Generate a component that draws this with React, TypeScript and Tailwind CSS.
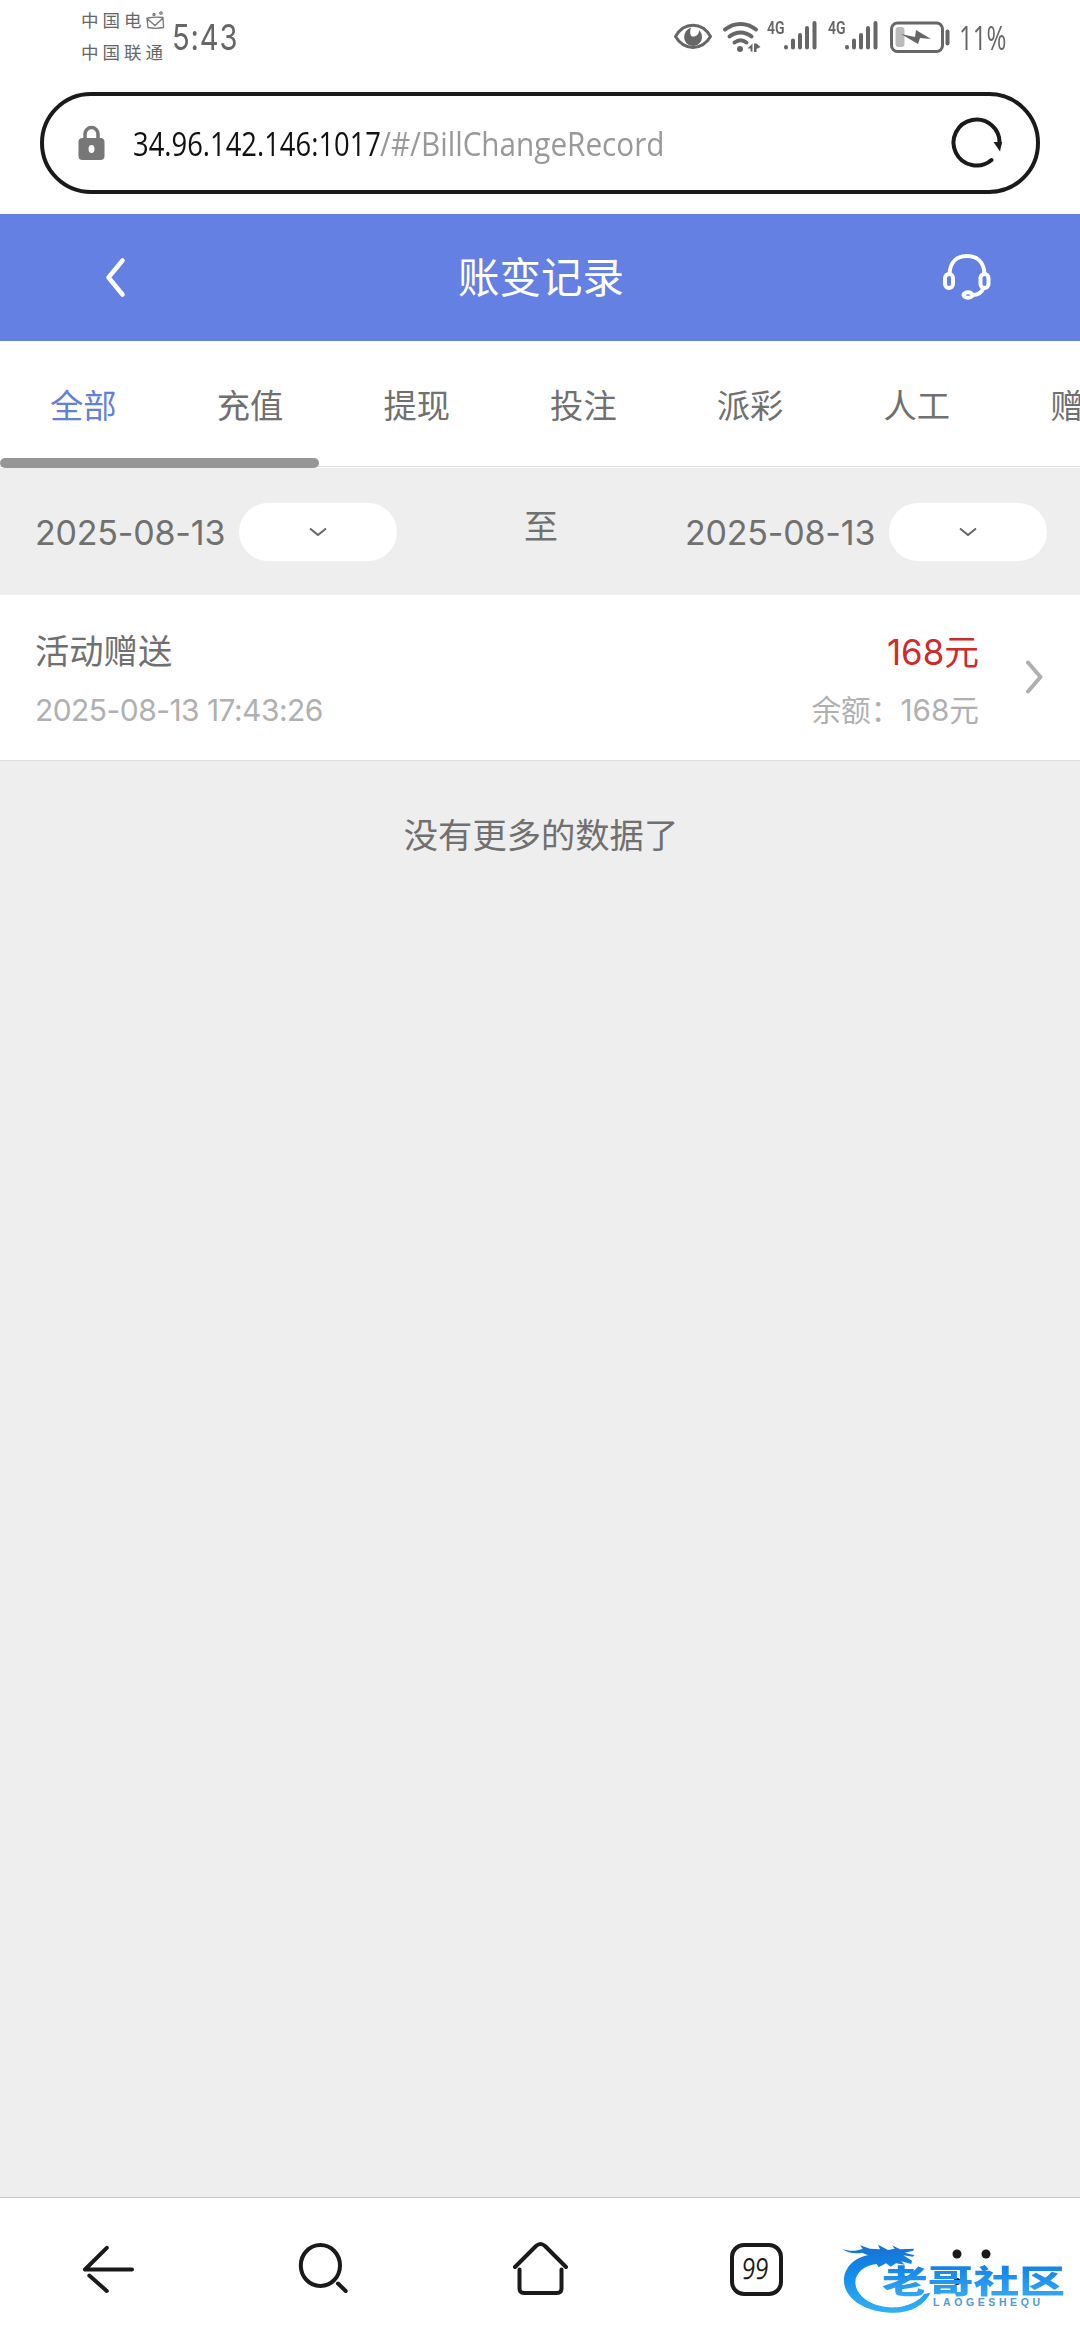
import React from 'react';

interface BillRecord {
  title: string;
  time: string;
  amount: string;
  balance: string;
}

const tabs = ['全部', '充值', '提现', '投注', '派彩', '人工', '赠送'];

const records: BillRecord[] = [
  { title: '活动赠送', time: '2025-08-13 17:43:26', amount: '168元', balance: '168元' },
];

const Signal: React.FC = () => (
  <div className="relative">
    <span className="absolute -top-px left-0 origin-left scale-x-[.78] font-['Roboto',sans-serif] text-[18px] leading-[20px] font-semibold">4G</span>
    <svg width="50" height="32" viewBox="0 0 50 32" fill="none" stroke="#666" strokeWidth="4" strokeLinecap="round">
      <path d="M19 28v.5M26 21.500v7M33 16v12.500M40 9v19.500M47.500 4v24.500" />
    </svg>
  </div>
);

const StatusBar: React.FC = () => (
  <div className="flex h-20 justify-between pt-2.5 pl-[81px] pr-[73px] text-[#666]">
    <div className="flex">
      <div className="w-[91px] text-[17.500px] leading-8 tracking-[4px]">
        <div className="flex h-[22px] items-center">
          中国电
          <svg width="19" height="20" viewBox="0 0 19 20" fill="none" stroke="#777" strokeWidth="1.300" strokeLinecap="round">
            <path d="M2 7c5-1 10-1 15-.5l.5 10c-5 1-11 1-15.500 0L1 7.500l8 7 8-7.500" />
            <circle cx="8" cy="3.500" r="1" />
            <circle cx="15" cy="2" r="1.200" />
          </svg>
        </div>
        <div className="mt-2.5 flex h-[22px] items-center">中国联通</div>
      </div>
      <div className="mt-2 w-[66px]">
        <span className="inline-block origin-left scale-x-[.81] text-[36px] leading-[38px] tracking-[1px]">5:43</span>
      </div>
    </div>
    <div className="flex">
      <svg className="mt-[13px]" width="38" height="27" viewBox="0 0 38 27" fill="none">
        <path d="M1.500 13.500C10-1.500 28-1.500 36.500 13.500 28 28 10 28 1.500 13.500Z" stroke="#666" strokeWidth="3" strokeLinejoin="round" />
        <path d="M17 4.500c-8 3-9 13-3 17 7 4 14-1 14-7.500 0-3-1-4.500-3-7 0 4-2 6-5 6.500-3 1-5-3-3-9Z" fill="#666" />
      </svg>
      <svg className="mt-[9px] ml-[10px]" width="40" height="34" viewBox="0 0 40 34" fill="none" stroke="#666" strokeWidth="4" strokeLinecap="round">
        <path d="M3 10.500C12 3 25 3 34 10.500M7.500 17.500C14 12 23 12 29.500 17.500M12.500 23.500c4-3 8-3 12 0" />
        <circle cx="18" cy="30" r="3" fill="#666" stroke="none" />
        <path d="M25.500 29.500l5-5v8h-2v-3ZM32 24.500h2.500l4 3.500-4 2v3H32Z" fill="#666" stroke="none" />
      </svg>
      <div className="mt-[9px] ml-[5px] flex gap-[11px]">
        <Signal />
        <Signal />
      </div>
      <svg className="mt-[11px] ml-[12px]" width="60" height="32" viewBox="0 0 60 32" fill="none">
        <rect x="1.500" y="2" width="51" height="28.500" rx="6" stroke="#666" strokeWidth="3" />
        <rect x="5.500" y="6" width="9" height="20" rx="3" fill="#bbb" />
        <path d="M11 13l14 3 1-7 15 9-11-1-2 6Z" fill="#666" />
        <path d="M57.500 10.500v12" stroke="#666" strokeWidth="4" strokeLinecap="round" />
      </svg>
      <div className="mt-2 ml-[9px] w-[48px] whitespace-nowrap">
        <span className="inline-block origin-left scale-x-[.73] font-['Open_Sans',sans-serif] text-[33px] leading-[40px]">11%</span>
      </div>
    </div>
  </div>
);

const AddressBar: React.FC = () => (
  <div className="mx-10 mt-3 mb-5 flex h-[102px] items-center rounded-full border-4 border-[#1a1a1a] pr-8 pl-[34px]">
    <svg width="28" height="36" viewBox="0 0 28 36">
      <path d="M7 14V9a6.500 6.500 0 0 1 13 0v5" fill="none" stroke="#777" strokeWidth="3.500" />
      <rect x="0.500" y="13" width="26" height="22" rx="4" fill="#777" />
      <ellipse cx="13.500" cy="24" rx="3" ry="4" fill="#fff" />
    </svg>
    <div className="ml-[27px] flex flex-1 items-center pt-0.5 whitespace-nowrap font-['Open_Sans',sans-serif] text-[33px] leading-[40px]">
      <div className="w-[247px]">
        <span className="inline-block origin-left scale-x-[.83] text-[#111]">34.96.142.146:1017</span>
      </div>
      <span className="inline-block origin-left scale-x-[.9] text-[#999]">/#/BillChangeRecord</span>
    </div>
    <svg className="-mt-0.5" width="54" height="54" viewBox="0 0 54 54" fill="none">
      <path d="M41.500 45A23 23 0 1 1 49.500 29" stroke="#1a1a1a" strokeWidth="4" strokeLinecap="round" />
      <path d="M43.500 27h8.500l-2 9.500Z" fill="#1a1a1a" />
    </svg>
  </div>
);

const PageHeader: React.FC = () => (
  <header className="flex h-[127px] items-center justify-between bg-[#6480e3] pr-[88px] pl-[102px] text-white">
    <svg width="32" height="42" viewBox="0 0 32 42" fill="none" stroke="currentColor" strokeWidth="4.500" strokeLinecap="round" strokeLinejoin="round">
      <path d="M20.500 3.500L6.500 20.500L20.500 37.500" />
    </svg>
    <h1 className="pt-[3px] pl-1.5 text-[41.500px] leading-none">账变记录</h1>
    <svg width="50" height="50" viewBox="0 0 50 50" fill="none" stroke="currentColor" strokeWidth="4">
      <path d="M7.500 21C8 8 16 3 25 3s17 5 17.500 18" />
      <rect x="3" y="21" width="8" height="14" rx="4" />
      <rect x="38.500" y="21" width="8" height="14" rx="4" />
      <path d="M41.500 35c-2 5-5 7-11 7" />
      <ellipse cx="26" cy="42" rx="4.500" ry="2.700" />
    </svg>
  </header>
);

const TabBar: React.FC = () => (
  <nav className="relative h-[127px] overflow-hidden">
    <div className="flex h-[126px] items-center border-b border-[#ddd] pt-[5px]">
      {tabs.map((tab, index) => (
        <div
          key={tab}
          className={`w-[166.700px] shrink-0 text-center text-[33.300px] leading-[50px] ${index === 0 ? 'text-[#6480d8]' : 'text-[#707070]'}`}
        >
          {tab}
        </div>
      ))}
    </div>
    <div className="absolute bottom-0 left-0 h-[10px] w-[319px] rounded-full bg-[#969696]" />
  </nav>
);

const DatePicker: React.FC<{ value: string }> = ({ value }) => (
  <div className="flex items-center">
    <span className="w-[204px] pt-0.5 text-[34px] leading-none whitespace-nowrap tracking-[-0.200px]">{value}</span>
    <button className="flex h-[58px] w-[158px] items-center justify-center rounded-full bg-white">
      <svg className="mt-px" width="18" height="10" viewBox="0 0 18 10" fill="none" stroke="#666" strokeWidth="2">
        <path d="M1 1.500l8 6.500 8-6.500" />
      </svg>
    </button>
  </div>
);

const RecordRow: React.FC<{ record: BillRecord }> = ({ record }) => (
  <div className="flex h-[166px] items-center border-b border-[#ddd] bg-white pr-[36px] pl-[35px]">
    <div className="flex-1 pt-[9px]">
      <div className="text-[34.300px] leading-[54px] text-[#707070]">{record.title}</div>
      <div className="mt-0.5 text-[30px] leading-[58px] tracking-[-0.550px] text-[#b0b0b0]">{record.time}</div>
    </div>
    <div className="pt-[9px] text-right">
      <div className="text-[34.800px] leading-[54px] text-[#cf2b2b]">{record.amount}</div>
      <div className="mt-0.5 text-[29.700px] leading-[58px] text-[#b0b0b0]">余额：{record.balance}</div>
    </div>
    <svg className="ml-[45px]" width="20" height="36" viewBox="0 0 20 36" fill="none" stroke="#b0b0b0" strokeWidth="4" strokeLinecap="round" strokeLinejoin="round">
      <path d="M4 2.500L16.500 17L4 31.500" />
    </svg>
  </div>
);

const BrowserNav: React.FC = () => (
  <footer className="grid h-[143px] grid-cols-5 items-center justify-items-center border-t border-[#c8c8c8] bg-white text-[#1a1a1a]">
    <svg width="60" height="60" viewBox="0 0 60 60" fill="none" stroke="currentColor" strokeWidth="4" strokeLinecap="round" strokeLinejoin="round">
      <path d="M28.800 8.800L7 30.500H54M11.300 36.500L28.800 52" />
    </svg>
    <svg width="60" height="60" viewBox="0 0 60 60" fill="none" stroke="currentColor" strokeWidth="4" strokeLinecap="round">
      <ellipse cx="26.400" cy="26.500" rx="19.600" ry="20.500" />
      <path d="M44 44.500L51.700 52" />
    </svg>
    <svg width="60" height="60" viewBox="0 0 60 60" fill="none" stroke="currentColor" strokeWidth="4" strokeLinecap="round" strokeLinejoin="round">
      <path d="M5 28L26 7Q30.500 3 35 7L56 28M9.500 30.500V49.500Q9.500 54 14 54H47Q51.500 54 51.500 49.500V30.500" />
    </svg>
    <div className="flex h-[53px] w-[53px] items-center justify-center rounded-[14px] border-4 border-[#1a1a1a]">
      <span className="inline-block -translate-y-0.5 scale-x-[.8] -skew-x-6 font-['Open_Sans',sans-serif] text-[29px] leading-none">99</span>
    </div>
    <svg width="60" height="60" viewBox="0 0 60 60" fill="currentColor">
      <circle cx="15" cy="15" r="4.500" />
      <circle cx="44" cy="15" r="4.500" />
      <circle cx="15" cy="42.500" r="3.500" />
    </svg>
  </footer>
);

const Watermark: React.FC = () => (
  <div className="absolute top-[2236px] left-[836px] h-[84px] w-[230px]">
    <svg className="absolute top-0 left-0" width="110" height="84" viewBox="0 0 330 252">
      <defs>
        <linearGradient id="dragon" x1="0" y1="0" x2="0" y2="1">
          <stop offset="0" stopColor="#1a6fd0" />
          <stop offset="0.400" stopColor="#118bec" />
          <stop offset="1" stopColor="#31b0f6" />
        </linearGradient>
      </defs>
      <path
        fill="url(#dragon)"
        d="M18 38C40 46 58 46 80 38L72 28L102 38L132 40L126 26L156 42L176 38L168 28L192 40L234 38L232 44L206 50L236 58L230 62L202 58L228 74L226 84L196 76L206 86L180 82L164 92L150 82L128 94L122 84C84 88 56 112 58 142C62 186 118 218 182 214C220 210 250 194 264 174L284 170C264 208 224 232 166 230C88 228 28 190 24 138C22 98 52 66 96 58L78 50C56 54 34 50 18 38Z"
      />
    </svg>
    <div className="absolute top-[27px] left-[46px] origin-left scale-x-[1.430] bg-gradient-to-b from-[#0f7fe6] to-[#38adf5] bg-clip-text text-[32px] leading-[38px] font-black whitespace-nowrap text-transparent">
      老哥社区
    </div>
    <div className="absolute top-[59px] left-[97px] font-['Liberation_Sans',sans-serif] text-[10.500px] leading-[14px] font-bold tracking-[3.600px] whitespace-nowrap text-[#4f9ad8]">
      LAOGESHEQU
    </div>
  </div>
);

const App: React.FC = () => {
  return (
    <div className="relative flex h-[2340px] w-[1080px] flex-col overflow-hidden bg-white font-['Inter','Noto_Sans_CJK_SC',sans-serif]">
      <StatusBar />
      <AddressBar />
      <PageHeader />
      <TabBar />
      <main className="flex-1 bg-[#eee] text-[#707070]">
        <div className="flex h-[127px] items-center justify-between pr-[33px] pl-[35px]">
          <DatePicker value="2025-08-13" />
          <span className="pb-2.5 text-[34px] leading-none">至</span>
          <DatePicker value="2025-08-13" />
        </div>
        {records.map((record) => (
          <RecordRow key={record.time} record={record} />
        ))}
        <p className="pt-[50px] pl-0.5 text-center text-[34.300px] leading-[50px]">没有更多的数据了</p>
      </main>
      <BrowserNav />
      <Watermark />
    </div>
  );
};

export default App;
